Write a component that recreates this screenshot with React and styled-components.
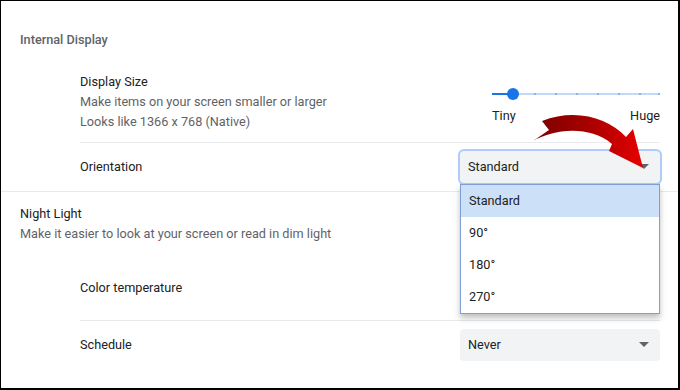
import styled, { createGlobalStyle } from 'styled-components';

const Global = createGlobalStyle`
  html, body {
    margin: 0;
    padding: 0;
    background: #fff;
  }
  body {
    font-family: Roboto, "Liberation Sans", sans-serif;
    font-size: 12.7px;
    color: #202124;
  }
`;

const Frame = styled.div`
  position: relative;
  width: 680px;
  height: 390px;
  box-sizing: border-box;
  border-style: solid;
  border-color: #000;
  border-width: 1px 2px 2px 1px;
  overflow: hidden;
  background: #fff;
`;

const SectionHeader = styled.div`
  padding: 29px 0 12px 19px;
  line-height: 20px;
  font-weight: 500;
  color: #5f6368;
`;

const Row = styled.div`
  display: flex;
  align-items: center;
  justify-content: space-between;
  margin: 0 18px 0 79px;
  min-height: ${(p) => p.$h || 48}px;
  padding: ${(p) => p.$pad || '0'};
  box-sizing: border-box;
  border-top: ${(p) => (p.$line ? '1px solid #e8eaed' : 'none')};
`;

const TopRow = styled(Row)`
  margin-left: 19px;
`;

const Divider = styled.div`
  height: 1px;
  background: #e8eaed;
`;

const Texts = styled.div`
  display: flex;
  flex-direction: column;
  line-height: 20px;
`;

const Label = styled.div`
  color: #202124;
`;

const Sub = styled.div`
  color: #5f6368;
`;

const SliderBox = styled.div`
  width: 168px;
  margin-top: 4px;
  display: flex;
  flex-direction: column;
`;

const Track = styled.div`
  position: relative;
  height: 24px;
  &::before {
    content: '';
    position: absolute;
    left: 0;
    right: 0;
    top: 11px;
    height: 2px;
    background: #c4d8f8;
  }
`;

const Active = styled.div`
  position: absolute;
  left: 0;
  top: 11px;
  height: 2px;
  background: #1a73e8;
`;

const Tick = styled.span`
  position: absolute;
  top: 11px;
  width: 2px;
  height: 2px;
  background: #8ab0ee;
`;

const Knob = styled.span`
  position: absolute;
  top: 6px;
  width: 12px;
  height: 12px;
  margin-left: -6px;
  border-radius: 50%;
  background: #1a73e8;
`;

const SliderLabels = styled.div`
  display: flex;
  justify-content: space-between;
  line-height: 20px;
  color: #202124;
`;

const SelectWrap = styled.div`
  position: relative;
  width: 200px;
`;

const Select = styled.div`
  display: flex;
  align-items: center;
  justify-content: space-between;
  height: 32px;
  padding: 0 8px;
  box-sizing: border-box;
  border-radius: 4px;
  background: #f1f3f4;
  color: #202124;
  box-shadow: ${(p) => (p.$focused ? '0 0 0 2px #aecbfa' : 'none')};
`;

const Caret = styled.span`
  width: 0;
  height: 0;
  margin-right: 3px;
  border-left: 5px solid transparent;
  border-right: 5px solid transparent;
  border-top: 5px solid #5f6368;
`;

const Menu = styled.ul`
  position: absolute;
  left: 0;
  right: 0;
  top: 33px;
  margin: 0;
  padding: 0;
  list-style: none;
  background: #fff;
  border: 1px solid #7d9fd6;
  box-shadow: 0 4px 6px rgba(0, 0, 0, 0.25);
  z-index: 5;
`;

const Option = styled.li`
  height: 32px;
  line-height: 32px;
  padding-left: 8px;
  background: ${(p) => (p.$selected ? '#cce0f8' : '#fff')};
  color: #202124;
`;

const Toggle = styled.span`
  width: 28px;
  height: 12px;
  border-radius: 6px;
  background: #dadce0;
`;

const Overlay = styled.svg`
  position: absolute;
  left: -1px;
  top: -1px;
  pointer-events: none;
  z-index: 10;
`;

function Slider({ steps, value }) {
  const step = 168 / (steps - 1);
  return (
    <SliderBox>
      <Track>
        {Array.from({ length: steps }).map((_, i) => (
          <Tick key={i} style={{ left: Math.min(i * step, 166) }} />
        ))}
        <Active style={{ width: value * step }} />
        <Knob style={{ left: value * step }} />
      </Track>
      <SliderLabels>
        <span>Tiny</span>
        <span>Huge</span>
      </SliderLabels>
    </SliderBox>
  );
}

const options = ['Standard', '90°', '180°', '270°'];

export default function App() {
  return (
    <Frame>
      <Global />
      <SectionHeader>Internal Display</SectionHeader>
      <Row $h={80} $pad="10px 0">
        <Texts>
          <Label>Display Size</Label>
          <Sub>Make items on your screen smaller or larger</Sub>
          <Sub>Looks like 1366 x 768 (Native)</Sub>
        </Texts>
        <Slider steps={9} value={1} />
      </Row>
      <Row $line $h={49} $pad="0 0 1px">
        <Label>Orientation</Label>
        <SelectWrap>
          <Select $focused>
            Standard
            <Caret />
          </Select>
          <Menu>
            {options.map((o, i) => (
              <Option key={o} $selected={i === 0}>
                {o}
              </Option>
            ))}
          </Menu>
        </SelectWrap>
      </Row>
      <Divider />
      <TopRow $h={62} $pad="12px 0 10px">
        <Texts>
          <Label>Night Light</Label>
          <Sub>Make it easier to look at your screen or read in dim light</Sub>
        </Texts>
        <Toggle />
      </TopRow>
      <Row $h={66}>
        <Label>Color temperature</Label>
      </Row>
      <Row $line $h={49} $pad="0 0 1px">
        <Label>Schedule</Label>
        <SelectWrap>
          <Select>
            Never
            <Caret />
          </Select>
        </SelectWrap>
      </Row>

      <Overlay width="680" height="390" viewBox="0 0 680 390">
        <defs>
          <linearGradient id="arrowFill" x1="533" y1="0" x2="643" y2="0" gradientUnits="userSpaceOnUse">
            <stop offset="0" stopColor="#7a0000" />
            <stop offset="0.5" stopColor="#a80000" />
            <stop offset="1" stopColor="#e60000" />
          </linearGradient>
        </defs>
        <path
          d="M533,141 C552,130 588,124 612,144 L609,151 L643,168 L633,129 L626,137 C608,117 574,108 542,121 L549,130 Z"
          fill="url(#arrowFill)"
        />
      </Overlay>
    </Frame>
  );
}
